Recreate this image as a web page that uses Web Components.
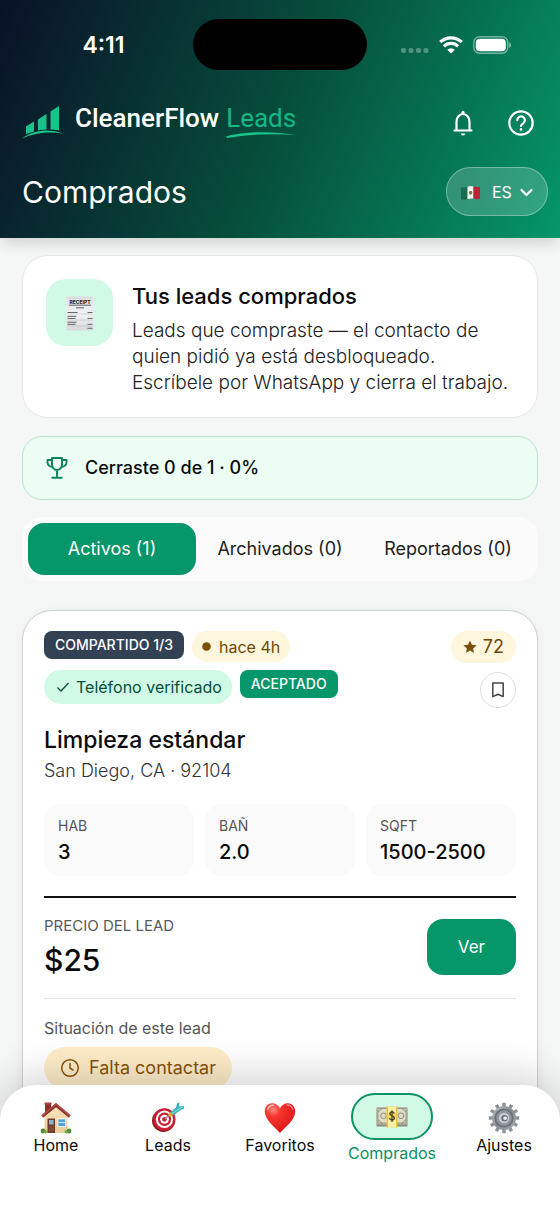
<!DOCTYPE html>
<html lang="es">
<head>
<meta charset="utf-8">
<meta name="viewport" content="width=device-width, initial-scale=1">
<title>CleanerFlow Leads</title>
<style>
  html, body { margin: 0; height: 100%; }
  body { background: #f4f7f5; color: #0b0b0b; font-family: Inter, "Open Sans", sans-serif; }
</style>
</head>
<body>
<leads-app></leads-app>

<script>
const define = (name, html) => {
  const tpl = document.createElement('template');
  tpl.innerHTML = html;
  customElements.define(name, class extends HTMLElement {
    constructor() {
      super();
      this.attachShadow({ mode: 'open' }).append(tpl.content.cloneNode(true));
    }
  });
};

/* ---------- Header ---------- */
define('status-bar', `
<style>
  :host { display: grid; grid-template-columns: 1fr 174px 1fr; align-items: center; }
  .time { padding-left: 14px; text-align: center; font-size: 23px; font-weight: 600; line-height: 28px; }
  .island { height: 51px; border-radius: 26px; background: #000; }
  .signals { display: flex; align-items: center; justify-content: center; gap: 10px; padding-right: 14px; }
  svg { display: block; }
</style>
<span class="time">4:11</span>
<span class="island"></span>
<span class="signals">
  <svg width="28" height="18" viewBox="0 0 28 18" fill="#fff" fill-opacity=".3"><rect y="12" width="5" height="5" rx="2"/><rect x="7.5" y="12" width="5" height="5" rx="2"/><rect x="15" y="12" width="5" height="5" rx="2"/><rect x="22.5" y="12" width="5" height="5" rx="2"/></svg>
  <svg width="24" height="18" viewBox="0 0 24 18" fill="none" stroke="#fff" stroke-width="3.2"><path d="M1.2 6.2a15.4 15.4 0 0 1 21.6 0"/><path d="M5 10.4a9.8 9.8 0 0 1 14 0"/><path d="M12 17.5 8.3 13.8a5.2 5.2 0 0 1 7.4 0z" fill="#fff" stroke="none"/></svg>
  <svg width="39" height="18" viewBox="0 0 39 18"><rect x=".8" y=".8" width="34" height="16.4" rx="5.6" fill="none" stroke="#fff" stroke-opacity=".45" stroke-width="1.4"/><rect x="2.8" y="2.8" width="30" height="12.4" rx="3.8" fill="#fff"/><path d="M36.2 6.2c2.4.9 2.4 4.7 0 5.6z" fill="#fff" fill-opacity=".5"/></svg>
</span>`);

define('brand-logo', `
<style>
  :host { display: flex; align-items: flex-start; gap: 12px; }
  svg { display: block; }
  .name { font: 500 26px/26px Roboto, sans-serif; white-space: nowrap; display: flex; gap: 7px; }
  .leads { position: relative; color: #14b886; font-weight: 400; }
  .leads svg { position: absolute; left: 0; top: 27px; width: 100%; height: 6px; }
</style>
<svg width="41" height="36" viewBox="0 0 41 36">
  <g fill="#19c389"><path d="M4 21.5 12 16.5V26.6L4 29z"/><path d="M16 14.5 24.5 9V24.4L16 25.3z"/><path d="M28.5 6.6 37 1V25.2L28.5 24.4z"/></g>
  <path d="M0 33.5C12 24.5 28 23.5 41 28.5 28 26.5 13 27.5 0 33.5z" fill="#19c389"/>
</svg>
<span class="name"><span>CleanerFlow</span><span class="leads">Leads<svg viewBox="0 0 66 6" preserveAspectRatio="none"><path d="M0 4.2C20-1 46-1 66 3 44 1.2 22 2.2 1 6z" fill="#19c389"/></svg></span></span>`);

define('icon-button', `
<style>
  :host { display: block; }
  button { display: grid; place-items: center; width: 40px; height: 40px; padding: 0; border: 0; background: none; color: inherit; cursor: pointer; }
</style>
<button type="button"><slot></slot></button>`);

define('language-picker', `
<style>
  :host { display: block; }
  label { position: relative; display: flex; align-items: center; gap: 12px; box-sizing: border-box; height: 49px; padding: 0 14px; border: 1px solid rgba(255,255,255,.32); border-radius: 25px; background: rgba(255,255,255,.18); }
  select { appearance: none; margin: 0; padding: 0 19px 0 0; border: 0; background: none; color: #fff; font: 400 16px/24px Inter, sans-serif; cursor: pointer; }
  option { color: #111; }
  .flag { display: block; margin-top: 3px; }
  .chevron { position: absolute; right: 14px; top: 19px; pointer-events: none; }
</style>
<label>
  <svg class="flag" width="19" height="14" viewBox="0 0 19 14" aria-hidden="true"><path d="M0 1.2C2.500 2 4.500 1.500 6.500.8V13C4.500 13.700 2.500 14 0 13.300z" fill="#1c6b50"/><path d="M6.500.8C8.500.2 10.500.2 12.500.5V12.600C10.500 12.200 8.500 12.400 6.500 13z" fill="#f3f3ef"/><path d="M12.500.5C14.500 1 16.500 1.300 19 .4V12.600C16.500 13.500 14.500 13.200 12.500 12.600z" fill="#bf2138"/><circle cx="9.600" cy="6.400" r="1.700" fill="#8b6a3c"/><path d="M8 7.500q1.600 2 3.200 0" stroke="#5f8a48" fill="none" stroke-width=".8"/></svg>
  <select aria-label="Idioma"><option selected>ES</option><option>EN</option></select>
  <svg class="chevron" width="13" height="11" viewBox="0 0 13 11" fill="none" stroke="#fff" stroke-width="2.200" stroke-linecap="round" stroke-linejoin="round" aria-hidden="true"><path d="M1.500 3 6.500 8 11.500 3"/></svg>
</label>`);

define('app-header', `
<style>
  :host { display: block; position: relative; padding: 19px 0 22px; color: #fff;
    background: linear-gradient(113deg, #0a1128 0%, #064e3b 50%, #059669 100%); box-shadow: 0 3px 16px rgba(10,40,30,.2); }
  .row { display: flex; align-items: center; justify-content: space-between; }
  .brand { margin-top: 33px; padding: 0 19px 0 22px; }
  .actions { display: flex; gap: 18px; }
  .title { margin-top: 24px; padding: 0 12px 0 22px; }
  h1 { margin: 0; font-size: 30px; line-height: 40px; font-weight: 400; }
  svg { display: block; }
</style>
<status-bar></status-bar>
<div class="row brand">
  <brand-logo></brand-logo>
  <div class="actions">
    <icon-button><svg width="26" height="28" viewBox="0 0 26 28" fill="none" stroke="#fff" stroke-width="2.200" stroke-linecap="round" stroke-linejoin="round" role="img" aria-label="Notificaciones"><path d="M4.500 21.500H21.500M6.500 21V12.500a6.500 7.500 0 0 1 13 0V21"/><path d="M13 3.200V4.500" stroke-width="3"/><path d="M10.600 24.500h4.800q-.6 1.900-2.400 1.900t-2.400-1.900z" fill="#fff" stroke="none"/></svg></icon-button>
    <icon-button><svg width="28" height="28" viewBox="0 0 28 28" fill="none" stroke="#fff" stroke-width="2.200" stroke-linecap="round" stroke-linejoin="round" role="img" aria-label="Ayuda"><circle cx="14" cy="14" r="11.700"/><path d="M10.300 11.200a3.800 3.800 0 1 1 5.900 3.100C14.600 15.400 14 15.900 14 17"/><path d="M14 20.200v.2" stroke-width="2.600"/></svg></icon-button>
  </div>
</div>
<div class="row title">
  <h1>Comprados</h1>
  <language-picker></language-picker>
</div>`);

/* ---------- Content ---------- */
define('intro-card', `
<style>
  :host { display: flex; align-items: flex-start; gap: 19px; padding: 23px 16px 21px 23px; border: 1px solid #e4e9e6; border-radius: 26px; background: #fff; }
  .icon { flex: none; display: grid; place-items: center; width: 67px; height: 67px; border-radius: 20px; background: #d0fae5; }
  h2 { margin: 0 0 5px; font-size: 22px; line-height: 34px; font-weight: 500; }
  p { margin: 0; max-width: 380px; font-size: 19px; line-height: 26px; font-weight: 300; color: #222; }
</style>
<span class="icon"><svg width="30" height="38" viewBox="0 0 30 38" aria-hidden="true">
  <defs><linearGradient id="paper" x2="0" y2="1"><stop stop-color="#dcdcdf"/><stop offset=".5" stop-color="#f3f3f5"/><stop offset="1" stop-color="#d9d9dc"/></linearGradient></defs>
  <path d="M1.500 2.500H28.500V36.500H1.500z" fill="url(#paper)"/>
  <text x="15" y="9.500" text-anchor="middle" font-family="Inter, sans-serif" font-size="5" font-weight="800" fill="#333">RECEIPT</text>
  <path d="M4 11.200H26" stroke="#444" stroke-width=".8"/>
  <path d="M11 13.800h8M2.500 18.500h10M22.500 18.500h5M2.500 22.300h9M2.500 24.400h8M22.500 24.400h5M2.500 28.200h9M2.500 30.300h8M22.500 30.300h5M22.500 34.300h5" stroke="#666" stroke-width="1"/>
  <path d="M2.500 20h25M2.500 26h25M2.500 32h25" stroke="#aaa" stroke-width=".4"/>
</svg></span>
<div><h2><slot name="title"></slot></h2><p><slot></slot></p></div>`);

define('close-rate', `
<style>
  :host { display: flex; align-items: center; gap: 16px; box-sizing: border-box; min-height: 64px; margin-top: 18px; padding: 0 22px; border: 1px solid #b9e2cf; border-radius: 20px; background: #ecfdf4; font-size: 18px; line-height: 24px; font-weight: 500; }
</style>
<svg width="24" height="24" viewBox="0 0 24 24" fill="none" stroke="#0f8257" stroke-width="1.900" stroke-linejoin="round" aria-hidden="true"><path d="M7 2H17V8.500a5 5.500 0 0 1-10 0zM7 4H2.500V6.500a4.500 4.500 0 0 0 4.900 4.200M17 4h4.500V6.500a4.500 4.500 0 0 1-4.900 4.200M12 14v7.500M6.500 21.800H17.500"/></svg>
<span><slot></slot></span>`);

define('lead-tabs', `
<style>
  :host { display: grid; grid-template-columns: repeat(3, 1fr); margin-top: 17px; padding: 6px; border-radius: 20px; background: #fafbfa; }
  button { height: 52px; padding: 0; border: 0; border-radius: 16px; background: none; color: #222; font: 400 18px/24px Inter, sans-serif; white-space: nowrap; cursor: pointer; }
  button[aria-pressed=true] { background: #059669; color: #fff; }
</style>
<button type="button" aria-pressed="true">Activos (1)</button>
<button type="button" aria-pressed="false">Archivados (0)</button>
<button type="button" aria-pressed="false">Reportados (0)</button>`);

define('tag-badge', `
<style>
  :host { display: block; padding: 0 11px; border-radius: 8px; background: #334155; color: #fff; font-size: 14px; line-height: 28px; font-weight: 500; white-space: nowrap; }
  :host([tone=green]) { background: #059669; }
</style>
<slot></slot>`);

define('info-chip', `
<style>
  :host { display: flex; align-items: center; gap: 8px; box-sizing: border-box; height: 31px; padding: 0 10px; border-radius: 16px; background: #fef6dd; color: #6f4806; font-size: 16px; line-height: 22px; font-weight: 400; white-space: nowrap; }
  :host([tone=mint]) { height: 34px; padding: 0 10px 0 12px; border-radius: 17px; gap: 6px; background: #d0fae5; color: #064e3b; }
  :host([size=score]) { height: 32px; padding: 0 12px; gap: 6px; font-size: 18px; }
  :host([size=large]) { display: inline-flex; height: 42px; padding: 0 16px; border-radius: 21px; gap: 9px; background: #feecc8; color: #8a5308; font-size: 18px; }
</style>
<slot name="icon"></slot><slot></slot>`);

define('lead-metric', `
<style>
  :host { display: block; padding: 13px 14px 11px; border-radius: 16px; background: #fafafa; }
  .label { margin-bottom: 4px; font-size: 14px; line-height: 18px; color: #555; }
  .value { font-size: 20px; line-height: 26px; font-weight: 500; }
</style>
<div class="label"><slot name="label"></slot></div>
<div class="value"><slot></slot></div>`);

define('lead-card', `
<style>
  :host { display: block; margin-top: 29px; padding: 20px 21px 60px; border: 1px solid #cbd2ce; border-radius: 30px; background: #fff; box-shadow: 0 2px 10px rgba(10,40,30,.06); }
  .top { display: flex; justify-content: space-between; gap: 12px; }
  .tags { display: flex; flex-wrap: wrap; align-items: flex-start; align-content: flex-start; gap: 8px; max-width: 330px; }
  .side { display: flex; flex-direction: column; align-items: flex-end; gap: 9px; }
  .save { display: grid; place-items: center; box-sizing: border-box; width: 36px; height: 36px; padding: 0; border: 1px solid #dedede; border-radius: 50%; background: #fff; cursor: pointer; }
  h3 { margin: 16px 0 2px; font-size: 23px; line-height: 32px; font-weight: 500; }
  .place { font-size: 18px; line-height: 26px; font-weight: 300; color: #333; }
  .metrics { display: grid; grid-template-columns: repeat(3, 1fr); gap: 11px; margin-top: 20px; }
  .deal { display: flex; align-items: center; justify-content: space-between; margin-top: 20px; padding: 18px 0 20px; border-top: 2px solid #111; border-bottom: 1px solid #e3e6e4; }
  .label { margin-bottom: 6px; font-size: 15px; line-height: 20px; color: #5a5a5a; }
  .price { font-size: 30px; line-height: 36px; font-weight: 500; }
  .view { height: 56px; padding: 0 31px; border: 0; border-radius: 16px; background: #059669; color: #fff; font: 400 17px/24px Inter, sans-serif; cursor: pointer; }
  .state { margin: 18px 0 8px; font-size: 16px; line-height: 22px; color: #555; }
  svg { display: block; }
</style>
<div class="top">
  <div class="tags">
    <tag-badge>COMPARTIDO 1/3</tag-badge>
    <info-chip><svg slot="icon" width="9" height="9" viewBox="0 0 9 9" aria-hidden="true"><circle cx="4.500" cy="4.500" r="4.300" fill="#7a4f08"/></svg>hace 4h</info-chip>
    <info-chip tone="mint"><svg slot="icon" width="14" height="14" viewBox="0 0 14 14" fill="none" stroke="#064e3b" stroke-width="1.300" aria-hidden="true"><path d="M1.500 7.500 5 11 12.500 3"/></svg>Teléfono verificado</info-chip>
    <tag-badge tone="green">ACEPTADO</tag-badge>
  </div>
  <div class="side">
    <info-chip size="score"><svg slot="icon" width="14" height="14" viewBox="0 0 24 24" aria-hidden="true"><path d="M12 1l3.300 7.300 8 .8-6 5.300 1.700 7.800L12 18.100 5 22.200l1.700-7.800-6-5.300 8-.8z" fill="#7a4f08"/></svg>72</info-chip>
    <button class="save" type="button" aria-label="Guardar"><svg width="14" height="16" viewBox="0 0 14 16" fill="none" stroke="#444" stroke-width="1.500" stroke-linejoin="round"><path d="M1.800 1H12.200V14.600L7 12.200 1.800 14.600z"/></svg></button>
  </div>
</div>
<h3>Limpieza estándar</h3>
<div class="place">San Diego, CA · 92104</div>
<div class="metrics">
  <lead-metric><span slot="label">HAB</span>3</lead-metric>
  <lead-metric><span slot="label">BAÑ</span>2.0</lead-metric>
  <lead-metric><span slot="label">SQFT</span>1500-2500</lead-metric>
</div>
<div class="deal">
  <div><div class="label">PRECIO DEL LEAD</div><div class="price">$25</div></div>
  <button class="view" type="button">Ver</button>
</div>
<div class="state">Situación de este lead</div>
<info-chip size="large"><svg slot="icon" width="20" height="20" viewBox="0 0 20 20" fill="none" stroke="#8a5308" stroke-width="1.500" stroke-linecap="round" aria-hidden="true"><circle cx="10" cy="10" r="8.300"/><path d="M10 5.500V10.200L13 12"/></svg>Falta contactar</info-chip>`);

/* ---------- Bottom navigation ---------- */
define('nav-item', `
<style>
  :host { display: block; padding-top: 9px; color: #0b0b0b; }
  a { display: flex; flex-direction: column; align-items: center; gap: 2px; color: inherit; text-decoration: none; font-size: 16px; line-height: 22px; font-weight: 400; }
  .icon { display: grid; place-items: center; box-sizing: border-box; height: 30px; }
  :host([current]) { padding-top: 0; color: #0a8f63; }
  :host([current]) .icon { width: 82px; height: 47px; border: 2px solid #0b9265; border-radius: 24px; background: #d0fae5; }
</style>
<a href="#"><span class="icon"><slot name="icon"></slot></span><span><slot></slot></span></a>`);

define('tab-bar', `
<style>
  :host { display: grid; grid-template-columns: repeat(5, 1fr); align-items: start; box-sizing: border-box; min-height: 133px; padding-top: 8px; border-radius: 36px 36px 0 0; background: #fff; box-shadow: 0 -8px 40px rgba(0,0,0,.18); }
  svg { display: block; }
</style>
<nav-item><svg slot="icon" width="32" height="32" viewBox="0 0 32 32" aria-hidden="true">
  <defs><linearGradient id="wall" x2="0" y2="1"><stop stop-color="#fbe6bd"/><stop offset="1" stop-color="#e8cb97"/></linearGradient></defs>
  <path d="M5 1h6v11H5z" fill="#8f2f2c"/><path d="M4.500.5h7v2.200h-7z" fill="#b04440"/>
  <path d="M4.500 13.500 16 3.500 27.500 13.500V31H4.500z" fill="url(#wall)"/>
  <path d="M16 1 1.500 13.200 3 15.800 16 5.200 29 15.800 30.500 13.200z" fill="#8e2f30"/><path d="M16 1 1.500 13.200 2.200 14.400 16 3 29.800 14.400 30.500 13.200z" fill="#b04c48"/>
  <path d="M7.500 16.500h7.500V31H7.500z" fill="#6f3b2a"/><path d="M9 18h4.500v4.500H9z" fill="#8ab5cc"/><path d="M9 24h4.500v5.500H9z" fill="#854a35"/>
  <path d="M17.500 16.500h8.500v8.500h-8.500z" fill="#fff"/><path d="M18.300 17.300h6.900v6.900h-6.900z" fill="#55a3d8"/><path d="M18.300 20.500h6.900" stroke="#fff" stroke-width=".7"/>
  <circle cx="3" cy="29" r="2.400" fill="#4d8b2f"/><circle cx="5.300" cy="29.800" r="1.800" fill="#6aa83e"/><circle cx="29" cy="29" r="2.400" fill="#4d8b2f"/><circle cx="26.500" cy="29.800" r="1.800" fill="#6aa83e"/>
</svg>Home</nav-item>
<nav-item><svg slot="icon" width="34" height="30" viewBox="0 0 34 30" aria-hidden="true">
  <ellipse cx="12.500" cy="18.500" rx="11.500" ry="11.400" fill="#8c1220"/>
  <ellipse cx="13.500" cy="17.500" rx="11" ry="11.200" fill="#c91f33"/><ellipse cx="13.500" cy="17.300" rx="8.600" ry="8.700" fill="#fff"/><ellipse cx="13.500" cy="17.300" rx="6.600" ry="6.700" fill="#c91f33"/><ellipse cx="13.500" cy="17.300" rx="4.400" ry="4.500" fill="#fff"/><ellipse cx="13.500" cy="17.300" rx="2.300" ry="2.400" fill="#c91f33"/>
  <path d="M13.800 17 19 12.500" stroke="#8d8d8d" stroke-width="1.500"/><path d="M18 13.800 21 11" stroke="#e5a62b" stroke-width="3.200"/>
  <path d="M19.500 10 25 5.500 26 1.200 28.500.5 28.300 4.500 33.200 3.800 33 6.500 29 8.500 22.500 13.200z" fill="#3fb4bd"/><path d="M21 11.500 32 4.500" stroke="#8fe0e2" stroke-width="1"/>
</svg>Leads</nav-item>
<nav-item><svg slot="icon" width="32" height="32" viewBox="0 0 32 32" aria-hidden="true">
  <defs><radialGradient id="heart" cx=".28" cy=".22" r=".9"><stop stop-color="#ff8a80"/><stop offset=".25" stop-color="#f5372f"/><stop offset="1" stop-color="#d91218"/></radialGradient></defs>
  <path d="M16 31C10 24.500 1 18 .8 9.500.8 4.200 4.300 1.200 8.300 1.200c3.400 0 6.300 2 7.700 5 1.400-3 4.300-5 7.700-5 4 0 7.500 3 7.500 8.300C31 18 22 24.500 16 31z" fill="url(#heart)"/>
  <path d="M3.500 7.500Q5.500 2.800 9.500 3.200" stroke="#fff" stroke-opacity=".6" stroke-width="1.600" fill="none" stroke-linecap="round"/><path d="M23 3Q27 3 28.800 7" stroke="#fff" stroke-opacity=".45" stroke-width="1.400" fill="none" stroke-linecap="round"/>
</svg>Favoritos</nav-item>
<nav-item current><svg slot="icon" width="32" height="22" viewBox="0 0 32 22" aria-hidden="true">
  <path d="M.5 2.500h31v18H.5z" fill="#8f8b78"/><path d="M.5 1h31v17.500H.5z" fill="#bdb9a4"/><path d="M2 2.500h28v14.500H2z" fill="#dedbc9" stroke="#8e8b79" stroke-width=".8"/>
  <g fill="none" stroke="#8e8b79" stroke-width="1"><circle cx="7.500" cy="9.800" r="2.800"/><circle cx="25" cy="9.800" r="2.800"/><path d="M2 6 6 2.500M2 13.500 6 17M30 6 26 2.500M30 13.500 26 17"/></g>
  <path d="M10.500.5h11v21h-11z" fill="#e9c62f"/><path d="M12 .5h8v21h-8z" fill="#fbf0a8"/>
  <circle cx="16" cy="10" r="4.600" fill="#f3d75f"/>
  <path d="M18.300 7.500q-.5-1.600-2.300-1.600t-2.200 1.800q.2 1.500 2.300 2.100t2.300 2.300q-.3 2-2.400 2t-2.500-1.900M16 4.300V16" fill="none" stroke="#4a4423" stroke-width="1.300"/>
</svg>Comprados</nav-item>
<nav-item><svg slot="icon" width="32" height="32" viewBox="0 0 32 32" aria-hidden="true">
  <defs><linearGradient id="steel" x2="1" y2="1"><stop stop-color="#b9bfc4"/><stop offset=".5" stop-color="#868c92"/><stop offset="1" stop-color="#a4aaaf"/></linearGradient></defs>
  <g stroke="#8a9096" stroke-width="3.400"><path d="M16 .8V31.200"/><path d="M16 .8V31.200" transform="rotate(30 16 16)"/><path d="M16 .8V31.200" transform="rotate(60 16 16)"/><path d="M16 .8V31.200" transform="rotate(90 16 16)"/><path d="M16 .8V31.200" transform="rotate(120 16 16)"/><path d="M16 .8V31.200" transform="rotate(150 16 16)"/></g>
  <circle cx="16" cy="16" r="12" fill="url(#steel)"/><circle cx="16" cy="16" r="9.600" fill="#6a7076"/><circle cx="16" cy="16" r="7.800" fill="#90969b"/><circle cx="16" cy="16" r="5.200" fill="#c9cdd3"/><circle cx="16.500" cy="16.300" r="3.200" fill="#6d727b"/><circle cx="17.200" cy="16.300" r="1.800" fill="#eef0f5"/>
</svg>Ajustes</nav-item>`);

/* ---------- Page ---------- */
define('leads-app', `
<style>
  :host { display: flex; flex-direction: column; height: 100vh; overflow: hidden; }
  app-header { flex: none; z-index: 1; }
  main { flex: 1; min-height: 0; padding: 17px 22px 0; overflow-y: auto; scrollbar-width: none; }
  /* The bar's rounded corners let the scrolled content show behind them. */
  tab-bar { flex: none; margin-top: -40px; z-index: 1; }
</style>
<app-header></app-header>
<main>
  <intro-card><span slot="title">Tus leads comprados</span>Leads que compraste — el contacto de quien pidió ya está desbloqueado. Escríbele por WhatsApp y cierra el trabajo.</intro-card>
  <close-rate>Cerraste 0 de 1 · 0%</close-rate>
  <lead-tabs></lead-tabs>
  <lead-card></lead-card>
</main>
<tab-bar></tab-bar>`);
</script>
</body>
</html>
